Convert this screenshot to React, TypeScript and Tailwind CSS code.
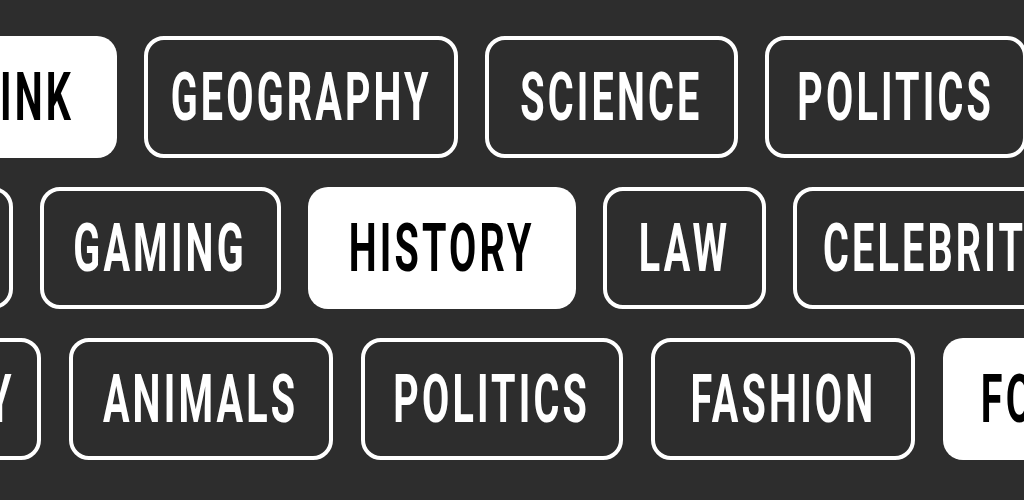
type Tag = { label: string; w: string; filled?: boolean };

const rows: { offset: string; gap: string; tags: Tag[] }[] = [
  {
    offset: "-ml-[101px]",
    gap: "gap-[27px]",
    tags: [
      { label: "DRINK", w: "w-[218px]", filled: true },
      { label: "GEOGRAPHY", w: "w-[314px]" },
      { label: "SCIENCE", w: "w-[253px]" },
      { label: "POLITICS", w: "w-[262px]" },
      { label: "MUSIC", w: "w-[210px]" },
    ],
  },
  {
    offset: "-ml-[187px]",
    gap: "gap-[27px]",
    tags: [
      { label: "MUSIC", w: "w-[200px]" },
      { label: "GAMING", w: "w-[241px]" },
      { label: "HISTORY", w: "w-[268px]", filled: true },
      { label: "LAW", w: "w-[163px]" },
      { label: "CELEBRITIES", w: "w-[330px]" },
    ],
  },
  {
    offset: "-ml-[273px]",
    gap: "gap-[28px]",
    tags: [
      { label: "GEOGRAPHY", w: "w-[314px]" },
      { label: "ANIMALS", w: "w-[264px]" },
      { label: "POLITICS", w: "w-[262px]" },
      { label: "FASHION", w: "w-[264px]" },
      { label: "FOOD", w: "w-[190px]", filled: true },
    ],
  },
];

function Pill({ tag }: { tag: Tag }) {
  return (
    <div
      className={`${tag.w} h-[122px] shrink-0 rounded-[20px] flex items-center justify-center ${
        tag.filled ? "bg-white text-black" : "border-4 border-white text-white"
      }`}
    >
      <span className="inline-block whitespace-nowrap text-[67px] leading-none font-bold tracking-[0.08em] scale-x-[0.59] font-['Roboto',sans-serif]">
        {tag.label}
      </span>
    </div>
  );
}

export default function App() {
  return (
    <div className="w-full h-[500px] overflow-hidden bg-[#2d2d2d] pt-[36px] flex flex-col gap-[29px]">
      {rows.map((row, i) => (
        <div key={i} className={`flex ${row.gap} ${row.offset}`}>
          {row.tags.map((t, j) => (
            <Pill key={j} tag={t} />
          ))}
        </div>
      ))}
    </div>
  );
}
